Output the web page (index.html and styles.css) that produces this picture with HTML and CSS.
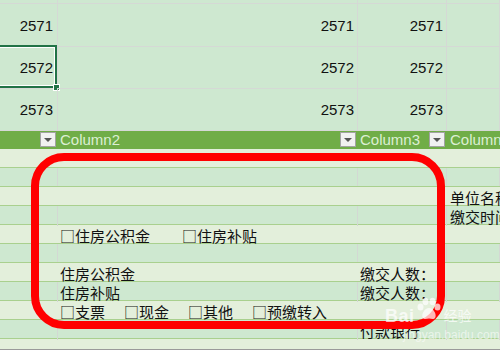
FILE: index.html
```html
<!DOCTYPE html>
<html>
<head>
<meta charset="utf-8">
<link rel="stylesheet" href="styles.css">
</head>
<body>
<div class="sheet">
  <div class="row top strip">
    <div class="cell"></div><div class="cell"></div><div class="cell"></div><div class="cell"></div>
  </div>
  <div class="row top big">
    <div class="cell num pa">2571</div><div class="cell num">2571</div><div class="cell num">2571</div><div class="cell"></div>
  </div>
  <div class="row top big">
    <div class="cell num pa sel">2572<span class="selbox"></span><span class="handle"></span></div><div class="cell num">2572</div><div class="cell num">2572</div><div class="cell"></div>
  </div>
  <div class="row top big">
    <div class="cell num pa">2573</div><div class="cell num">2573</div><div class="cell num">2573</div><div class="cell"></div>
  </div>
  <div class="row head">
    <div class="hcell"><span class="htext"></span><span class="dd"></span></div>
    <div class="hcell"><span class="htext">Column2</span><span class="dd"></span></div>
    <div class="hcell"><span class="htext">Column3</span><span class="dd"></span></div>
    <div class="hcell"><span class="htext">Column4</span></div>
  </div>
  <div class="row band light"><div class="cell"></div><div class="cell"></div><div class="cell"></div><div class="cell"></div></div>
  <div class="row band dark"><div class="cell"></div><div class="cell"></div><div class="cell"></div><div class="cell"></div></div>
  <div class="row band light"><div class="cell"></div><div class="cell"></div><div class="cell"></div><div class="cell zh">单位名称</div></div>
  <div class="row band dark"><div class="cell"></div><div class="cell"></div><div class="cell"></div><div class="cell zh">缴交时间</div></div>
  <div class="row band light"><div class="cell"></div><div class="cell zh"><span class="opt1">□住房公积金</span><span>□住房补贴</span></div><div class="cell"></div><div class="cell"></div></div>
  <div class="row band dark"><div class="cell"></div><div class="cell"></div><div class="cell"></div><div class="cell"></div></div>
  <div class="row band light"><div class="cell"></div><div class="cell zh">住房公积金</div><div class="cell zh">缴交人数：</div><div class="cell"></div></div>
  <div class="row band dark"><div class="cell"></div><div class="cell zh">住房补贴</div><div class="cell zh">缴交人数：</div><div class="cell"></div></div>
  <div class="row band light"><div class="cell"></div><div class="cell zh pay"><span>□支票</span><span>□现金</span><span>□其他</span><span>□预缴转入</span></div><div class="cell"></div><div class="cell"></div></div>
  <div class="row band dark"><div class="cell"></div><div class="cell"></div><div class="cell zh">付款银行</div><div class="cell"></div></div>
  <div class="row band light last"><div class="cell"></div><div class="cell"></div><div class="cell"></div><div class="cell"></div></div>
</div>
<div class="redbox"></div>
<div class="watermark">
  <div class="wm-main">
    <span class="wm-bai">Bai</span>
    <svg class="paw" width="27" height="24" viewBox="0 0 26 24">
      <ellipse cx="5" cy="10" rx="3" ry="3.6" fill="#fff"/>
      <ellipse cx="10" cy="4.5" rx="3" ry="3.8" fill="#fff"/>
      <ellipse cx="17" cy="4.5" rx="3" ry="3.8" fill="#fff"/>
      <ellipse cx="22" cy="10" rx="3" ry="3.6" fill="#fff"/>
      <path d="M13.5 11 C9 11 6 17 7 20 C8 23 11 22 13.5 21.5 C16 22 19 23 20 20 C21 17 18 11 13.5 11 Z" fill="#fff"/>
    </svg>
    <span class="wm-jy">经验</span>
  </div>
  <div class="wm-url">jingyan.baidu.com</div>
</div>
<div class="bottomline"></div>
</body>
</html>
```
FILE: styles.css
```css
* { box-sizing: border-box; }
body {
  margin: 0;
  width: 500px;
  height: 350px;
  overflow: hidden;
  position: relative;
  background: #cee8d0;
  font-family: "Liberation Sans", Arial, sans-serif;
  color: #111;
}
.sheet { display: flex; flex-direction: column; }
.row {
  display: grid;
  grid-template-columns: 58px 300px 89px 1fr;
}
.cell {
  position: relative;
  white-space: nowrap;
  overflow: visible;
}
.top .cell {
  border-right: 1px solid #d5d9d5;
  border-bottom: 1px solid #d5d9d5;
}
.strip { height: 4px; }
.big { height: 42px; }
.num {
  text-align: right;
  padding-right: 3px;
  font-size: 15px;
  line-height: 41px;
  padding-top: 1px;
}
.pa { padding-right: 4px; }
.selbox {
  position: absolute;
  left: -5px;
  top: -1px;
  width: 62px;
  height: 43px;
  border: 2px solid #217346;
  box-shadow: inset 0 0 0 1px #fff;
}
.handle {
  position: absolute;
  left: 53px;
  top: 38px;
  width: 7px;
  height: 7px;
  background: #217346;
  border: 1px solid #fff;
}
.head {
  height: 19px;
  background: #70ad47;
}
.hcell {
  display: flex;
  align-items: center;
  justify-content: space-between;
  padding: 0 2px;
  white-space: nowrap;
  overflow: visible;
}
.hcell:last-child { padding-left: 3px; }
.htext {
  color: #dcefd3;
  font-size: 15px;
  line-height: 19px;
}
.dd {
  width: 16px;
  height: 15px;
  background: #f1f1f1;
  border: 1px solid #a3a3a3;
  display: flex;
  align-items: center;
  justify-content: center;
}
.dd::after {
  content: "";
  border-left: 4px solid transparent;
  border-right: 4px solid transparent;
  border-top: 4px solid #555;
}
.band {
  height: 19px;
  border-bottom: 1px solid #a9d08e;
}
.band.light { background: #e3efdb; }
.band.dark .cell { border-right: 1px solid #d3d8d3; }
.band.last { height: 10px; border-bottom: none; }
.zh {
  font-family: "Noto Sans CJK SC", sans-serif;
  font-size: 15px;
  line-height: 19px;
  padding-left: 2px;
  padding-top: 1px;
  color: #111;
}
.band .cell:last-child.zh { padding-left: 3px; }
.opt1 { margin-right: 32px; }
.pay { display: flex; gap: 19px; }
.redbox {
  position: absolute;
  left: 31px;
  top: 153px;
  width: 414px;
  height: 176px;
  border: 8px solid #ff0000;
  border-radius: 33px;
}
.watermark {
  position: absolute;
  left: 385px;
  top: 297px;
  opacity: 0.72;
  color: #fff;
}
.wm-main { display: flex; align-items: flex-end; }
.wm-bai {
  font-family: "Liberation Sans", Arial, sans-serif;
  font-size: 18px;
  line-height: 18px;
  font-weight: bold;
  letter-spacing: 0.5px;
  margin-bottom: -1px;
}
.paw { margin: 0 2px 3px 0; }
.wm-jy {
  font-family: "Noto Sans CJK SC", sans-serif;
  font-size: 14px;
  line-height: 18px;
  margin-bottom: 0;
}
.wm-url {
  font-size: 12px;
  margin-left: 18px;
  margin-top: 4px;
  opacity: 0.8;
}
.bottomline {
  position: absolute;
  left: 0;
  right: 0;
  top: 349px;
  height: 1px;
  background: #9a9a9a;
}
```
